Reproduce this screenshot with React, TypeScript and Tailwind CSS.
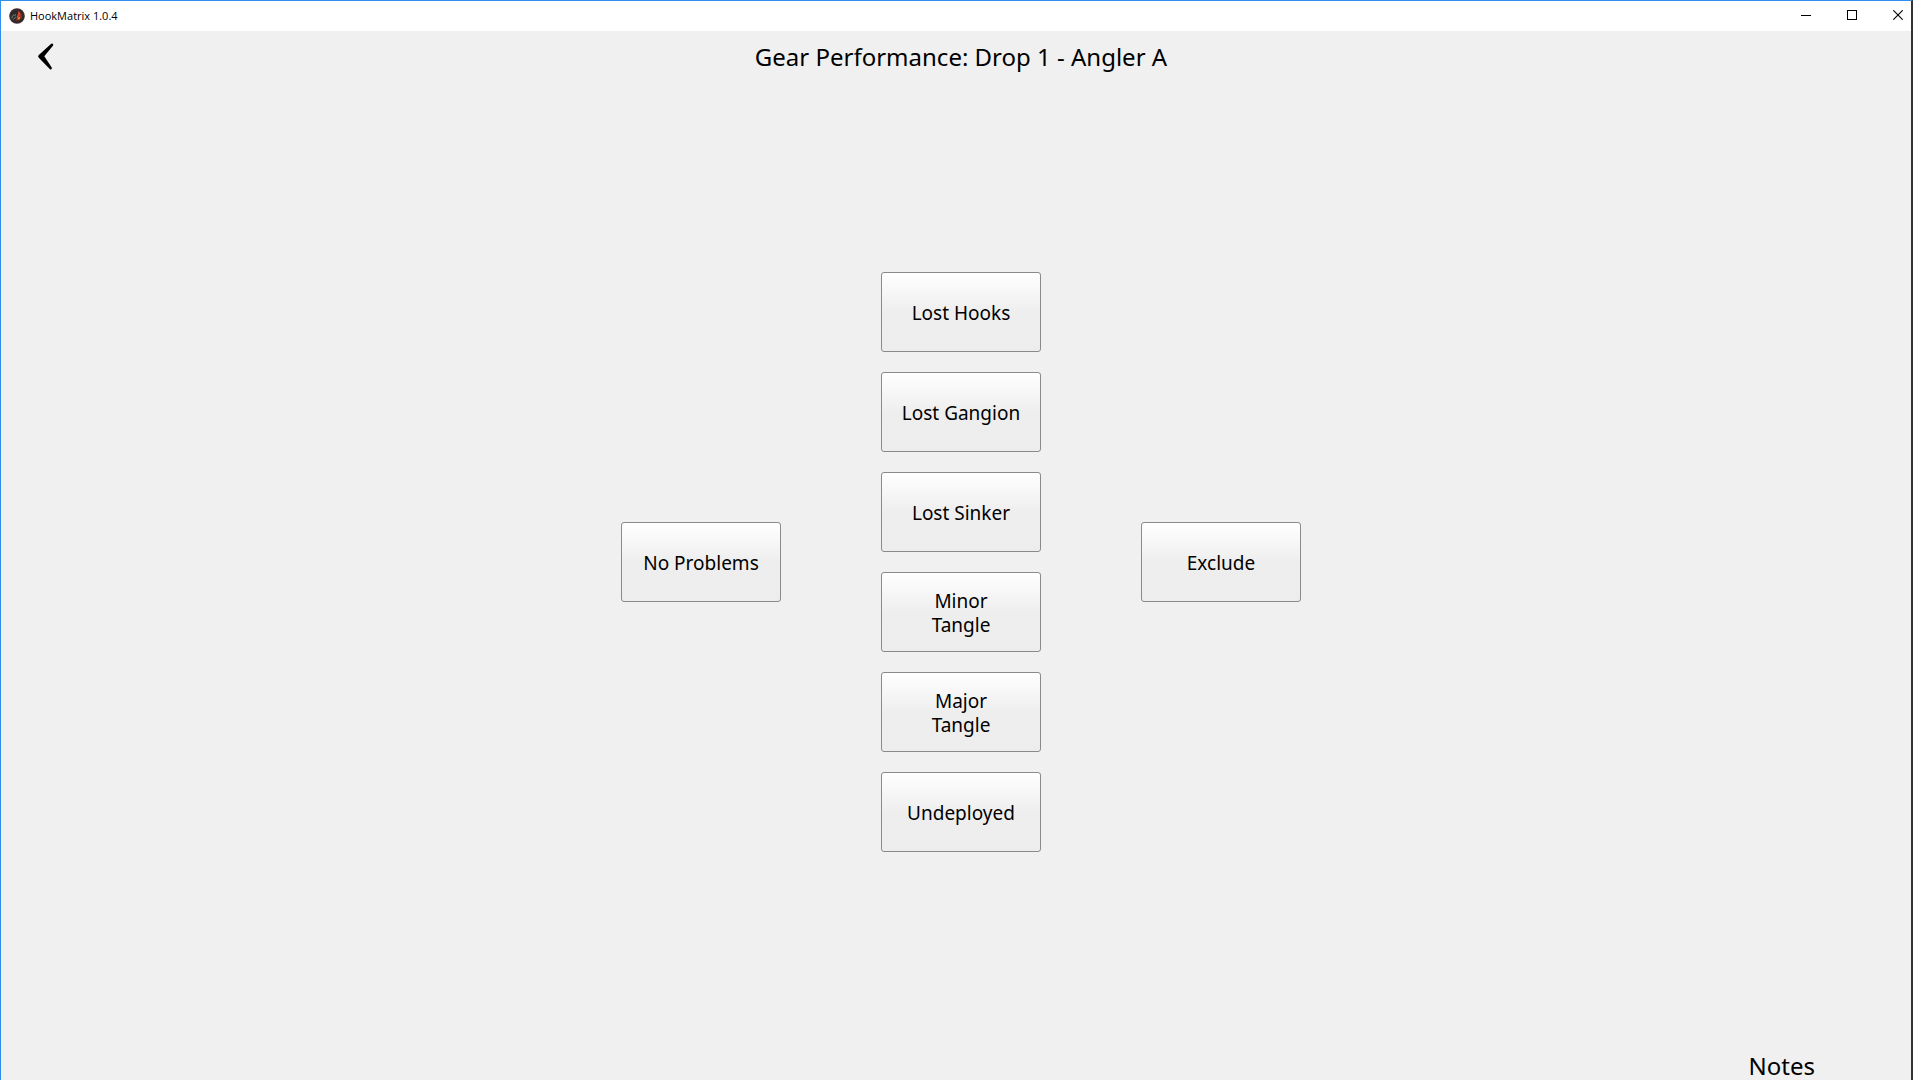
import type { ReactNode } from "react";

function GearButton({ children }: { children: ReactNode }) {
  return (
    <button
      type="button"
      className="flex h-20 w-40 items-center justify-center rounded-[3px] border border-[#8a8a8a] bg-linear-to-b from-white via-[#eeeeee] via-50% to-[#ededed] pt-0.5 text-center text-[19px] leading-6 whitespace-nowrap text-black"
    >
      {children}
    </button>
  );
}

function AppIcon() {
  return (
    <svg viewBox="0 0 16 16" className="size-4" aria-hidden="true">
      <circle cx="8" cy="8" r="7.8" fill="#4a2a30" />
      <circle cx="8" cy="8" r="6.8" fill="#2b2b2b" />
      <path d="M9.5 2.5 L13 6.5 L13 10 L10 12.5 L6.5 12.5 L8.5 8 Z" fill="#8f2a1c" />
      <path d="M9.8 3 L11.5 6 L9 10 L8 9 Z" fill="#e0452b" />
      <path d="M8 10 L11.5 8.5 L10 12 Z" fill="#c9963c" />
      <path d="M7 7 C4.5 6.5 2.5 8 3 10.5 M7 8.5 L4.5 11.5" fill="none" stroke="#76828a" strokeWidth="1" />
    </svg>
  );
}

function TitleBar() {
  return (
    <header className="flex h-[30px] shrink-0 items-center justify-between bg-white pl-2">
      <div className="flex items-center gap-[5px] text-[11px] leading-4 font-['Open_Sans','Noto_Sans',sans-serif]">
        <AppIcon />
        <span>HookMatrix 1.0.4</span>
      </div>
      <div className="flex h-7 items-center gap-9 self-start pr-2">
        <button type="button" aria-label="Minimize">
          <svg viewBox="0 0 10 10" className="size-[10px]" shapeRendering="crispEdges">
            <path d="M0 5h10v1H0z" />
          </svg>
        </button>
        <button type="button" aria-label="Maximize">
          <svg viewBox="0 0 10 10" className="size-[10px]" shapeRendering="crispEdges">
            <path d="M0.5 0.5h9v9h-9z" fill="none" stroke="#000" />
          </svg>
        </button>
        <button type="button" aria-label="Close">
          <svg viewBox="0 0 10 10" className="size-[10px]">
            <path d="M0.3 0.3l9.4 9.4M9.7 0.3l-9.4 9.4" fill="none" stroke="#000" strokeWidth="1.1" />
          </svg>
        </button>
      </div>
    </header>
  );
}

export default function App() {
  return (
    <div className="flex h-screen flex-col overflow-hidden border-t border-r-2 border-l border-t-[#2f8eee] border-r-[#333333] border-l-[#2f8eee] bg-[#f0f0f0] text-black font-['Noto_Sans',sans-serif]">
      <TitleBar />
      <div className="grid h-[51px] shrink-0 grid-cols-[80px_1fr_70px] items-center">
        <button type="button" aria-label="Back" className="flex h-full items-center pl-[37px]">
          <svg viewBox="0 0 16 27" className="h-[27px] w-4" aria-hidden="true">
            <path
              d="M13.5 0.4 C15 0.2 15.8 1.5 14.9 2.8 L6.3 13.2 L13.7 24.5 C14.3 25.8 13.3 27 12 26.2 L0.8 14.8 C0 13.8 0 12.8 0.8 12 Z"
              fill="#000"
            />
          </svg>
        </button>
        <h1 className="text-center text-2xl">Gear Performance: Drop 1 - Angler A</h1>
      </div>
      <main className="flex flex-1 items-center justify-center gap-[100px] pl-[10px]">
        <GearButton>No Problems</GearButton>
        <div className="flex flex-col gap-5">
          <GearButton>Lost Hooks</GearButton>
          <GearButton>Lost Gangion</GearButton>
          <GearButton>Lost Sinker</GearButton>
          <GearButton>
            Minor
            <br />
            Tangle
          </GearButton>
          <GearButton>
            Major
            <br />
            Tangle
          </GearButton>
          <GearButton>Undeployed</GearButton>
        </div>
        <GearButton>Exclude</GearButton>
      </main>
      <footer className="flex h-[38px] shrink-0 items-end justify-end pr-24">
        <button type="button" className="text-2xl leading-7">
          Notes
        </button>
      </footer>
    </div>
  );
}
